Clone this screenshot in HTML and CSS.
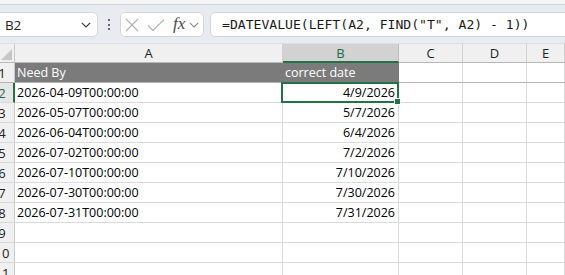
FILE: index.html
```html
<!DOCTYPE html>
<html>
<head>
<meta charset="utf-8">
<link rel="stylesheet" href="styles.css">
</head>
<body>
<div class="topstrip"></div>
<div class="toolbar">
  <div class="namebox">
    <span class="nb-text">B2</span>
    <svg class="nb-chev" width="10" height="6" viewBox="0 0 10 6"><path d="M0.8 0.8 L5 5 L9.2 0.8" fill="none" stroke="#3b3b3b" stroke-width="1.2"/></svg>
  </div>
  <div class="dots"><span></span><span></span><span></span></div>
  <div class="fxbox">
    <svg class="ico-x" width="14" height="14" viewBox="0 0 14 14"><path d="M1 1 L13 13 M13 1 L1 13" stroke="#b4b4b4" stroke-width="1.2" fill="none"/></svg>
    <svg class="ico-check" width="18" height="14" viewBox="0 0 18 14"><path d="M1 7.5 L6 12.5 L17 1.5" stroke="#b4b4b4" stroke-width="1.2" fill="none"/></svg>
    <span class="fx">fx</span>
    <svg class="fx-chev" width="10" height="6" viewBox="0 0 10 6"><path d="M0.8 0.8 L5 5 L9.2 0.8" fill="none" stroke="#8a8a8a" stroke-width="1.1"/></svg>
  </div>
  <div class="formula">=DATEVALUE(LEFT(A2, FIND("T", A2) - 1))</div>
</div>
<div class="sheet">
  <div class="corner"><div class="tri"></div></div>
  <div class="colhead">A</div>
  <div class="colhead sel">B</div>
  <div class="colhead">C</div>
  <div class="colhead">D</div>
  <div class="colhead">E</div>

  <div class="rowhead frz"><span>1</span></div>
  <div class="cell fill frz">Need By</div>
  <div class="cell fill frz">correct date</div>
  <div class="cell frz"></div><div class="cell frz"></div><div class="cell frz"></div>

  <div class="rowhead selrow"><span>2</span></div>
  <div class="cell">2026-04-09T00:00:00</div>
  <div class="cell num active">4/9/2026</div>
  <div class="cell"></div><div class="cell"></div><div class="cell"></div>

  <div class="rowhead"><span>3</span></div>
  <div class="cell">2026-05-07T00:00:00</div>
  <div class="cell num">5/7/2026</div>
  <div class="cell"></div><div class="cell"></div><div class="cell"></div>

  <div class="rowhead"><span>4</span></div>
  <div class="cell">2026-06-04T00:00:00</div>
  <div class="cell num">6/4/2026</div>
  <div class="cell"></div><div class="cell"></div><div class="cell"></div>

  <div class="rowhead"><span>5</span></div>
  <div class="cell">2026-07-02T00:00:00</div>
  <div class="cell num">7/2/2026</div>
  <div class="cell"></div><div class="cell"></div><div class="cell"></div>

  <div class="rowhead"><span>6</span></div>
  <div class="cell">2026-07-10T00:00:00</div>
  <div class="cell num">7/10/2026</div>
  <div class="cell"></div><div class="cell"></div><div class="cell"></div>

  <div class="rowhead"><span>7</span></div>
  <div class="cell">2026-07-30T00:00:00</div>
  <div class="cell num">7/30/2026</div>
  <div class="cell"></div><div class="cell"></div><div class="cell"></div>

  <div class="rowhead"><span>8</span></div>
  <div class="cell">2026-07-31T00:00:00</div>
  <div class="cell num">7/31/2026</div>
  <div class="cell"></div><div class="cell"></div><div class="cell"></div>

  <div class="rowhead"><span>9</span></div>
  <div class="cell"></div><div class="cell"></div><div class="cell"></div><div class="cell"></div><div class="cell"></div>

  <div class="rowhead"><span>10</span></div>
  <div class="cell"></div><div class="cell"></div><div class="cell"></div><div class="cell"></div><div class="cell"></div>

  <div class="rowhead"><span>11</span></div>
  <div class="cell"></div><div class="cell"></div><div class="cell"></div><div class="cell"></div><div class="cell"></div>
</div>
</body>
</html>
```
FILE: styles.css
```css
html, body {
  margin: 0;
  padding: 0;
  width: 565px;
  height: 275px;
  overflow: hidden;
  background: #ffffff;
  font-family: "Open Sans", "Liberation Sans", sans-serif;
}

.topstrip {
  height: 4px;
  background: #f4f4f4;
  border-bottom: 1px solid #d3d6d9;
}

.toolbar {
  height: 39px;
  background: #e8ecf0;
  display: flex;
  align-items: flex-start;
  padding-top: 7px;
  box-sizing: border-box;
  border-bottom: 1px solid #dcdfe2;
}

.namebox {
  margin-left: -4px;
  width: 102px;
  height: 25px;
  box-sizing: border-box;
  background: #fff;
  border: 1px solid #d4d7da;
  border-radius: 5px;
  display: flex;
  align-items: center;
  padding-left: 8px;
  padding-right: 6px;
}
.nb-text {
  font-size: 13.5px;
  color: #222;
  flex: 1;
  letter-spacing: -0.3px;
}
.nb-chev { display: block; }

.dots {
  width: 2px;
  margin-left: 10px;
  height: 25px;
  display: flex;
  flex-direction: column;
  justify-content: center;
  gap: 2.5px;
}
.dots span {
  display: block;
  width: 2px;
  height: 2px;
  background: #3f3f3f;
  border-radius: 1px;
}

.fxbox {
  margin-left: 10px;
  width: 84px;
  height: 25px;
  box-sizing: border-box;
  background: #fff;
  border: 1px solid #d4d7da;
  border-radius: 5px;
  display: flex;
  align-items: center;
  padding-left: 4px;
}
.ico-x { display: block; margin-left: 0px; }
.ico-check { display: block; margin-left: 8px; }
.fx {
  font-family: "Liberation Serif", "DejaVu Serif", serif;
  font-style: italic;
  font-size: 17px;
  color: #4a4a4a;
  margin-left: 8px;
  line-height: 20px;
  margin-top: -2px;
}
.fx-chev { display: block; margin-left: 4px; }

.formula {
  margin-left: 6px;
  flex: 1;
  margin-right: -10px;
  height: 25px;
  box-sizing: border-box;
  background: #fff;
  border: 1px solid #d4d7da;
  border-radius: 5px;
  font-family: "DejaVu Sans Mono", "Liberation Mono", monospace;
  font-size: 13.1px;
  line-height: 23px;
  padding-left: 11px;
  color: #1a1a1a;
  white-space: pre;
}

.sheet {
  display: grid;
  grid-template-columns: 15px 268px 116px 64px 64px 1fr;
  grid-template-rows: 19px repeat(11, 20px);
}

.corner {
  background: #f0f0f0;
  border-right: 1px solid #c9c9c9;
  border-bottom: 1px solid #b8b8b8;
  box-sizing: border-box;
  display: flex;
  align-items: flex-end;
  justify-content: flex-end;
  padding: 0 2px 2px 0;
}
.tri {
  width: 0;
  height: 0;
  border-left: 11px solid transparent;
  border-bottom: 11px solid #c6c6c6;
}

.colhead {
  background: #f0f0f0;
  border-right: 1px solid #d0d0d0;
  border-bottom: 1px solid #b8b8b8;
  box-sizing: border-box;
  font-family: "Open Sans", "Liberation Sans", sans-serif;
  font-size: 13px;
  color: #222;
  text-align: center;
  line-height: 18px;
}
.colhead.sel {
  background: #d2d2d2;
  color: #1e6b41;
  border-bottom: 2px solid #217346;
  border-right-color: #bdbdbd;
}

.rowhead {
  background: #f0f0f0;
  border-right: 1px solid #c9c9c9;
  border-bottom: 1px solid #d8d8d8;
  box-sizing: border-box;
  overflow: hidden;
  font-size: 13px;
  color: #222;
  line-height: 20px;
}
.rowhead span {
  display: block;
  width: 28px;
  margin-left: -12px;
  text-align: center;
}
.rowhead.selrow {
  background: #e6e6e6;
  color: #1e6b41;
  border-right: 2px solid #217346;
}
.rowhead.frz {
  border-bottom-color: #b5b5b5;
}

.cell {
  border-right: 1px solid #dadada;
  border-bottom: 1px solid #dadada;
  box-sizing: border-box;
  font-size: 12.5px;
  line-height: 20px;
  padding-left: 2px;
  padding-right: 3px;
  color: #000;
  white-space: nowrap;
  overflow: visible;
  position: relative;
}
.cell.num { text-align: right; }
.cell.fill {
  background: #7b7b7b;
  color: #fff;
  border-right-color: #7b7b7b;
}
.cell.frz {
  border-bottom-color: #b5b5b5;
}

.cell.active::after {
  content: "";
  position: absolute;
  left: -2px;
  top: -1px;
  right: -1px;
  bottom: -1px;
  border: 2px solid #217346;
  pointer-events: none;
}
.cell.active::before {
  content: "";
  position: absolute;
  right: -3px;
  bottom: -3px;
  width: 5px;
  height: 5px;
  background: #217346;
  border: 1px solid #fff;
  z-index: 2;
}
```
